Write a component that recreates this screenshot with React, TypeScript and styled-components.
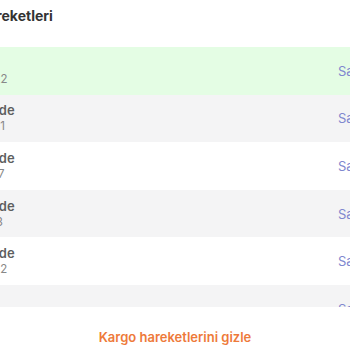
import * as React from 'react'
import styled, {createGlobalStyle} from 'styled-components'

const GlobalStyle = createGlobalStyle`
  html, body {
    margin: 0;
    padding: 0;
    background: #ffffff;
    overflow: hidden;
  }
  body {
    font-family: Inter, "Noto Sans", sans-serif;
  }
`

interface IMovement {
    status: string
    date: string
    time: string
    delivered?: boolean
}

const movements: IMovement[] = [
    {status: 'Teslim', date: '14.03.2022', time: 'Salı, 14:22', delivered: true},
    {status: 'Kargo İade', date: '13.03.2021', time: 'Salı, 09:41'},
    {status: 'Kargo İade', date: '12.03.2017', time: 'Salı, 18:05'},
    {status: 'Kargo İade', date: '11.03.2013', time: 'Salı, 11:30'},
    {status: 'Kargo İade', date: '10.03.2022', time: 'Salı, 16:12'},
    {status: 'Yolda', date: '09.03.2022', time: 'Salı, 08:55'},
]

const Panel = styled.div`
  margin-left: -74px;
  width: 498px;
`

const Title = styled.h3`
  margin: 0;
  padding: 6px 16px 21px 9px;
  font-size: 14px;
  line-height: 20px;
  font-weight: 700;
  color: #333333;
`

const List = styled.ul`
  list-style: none;
  margin: 0;
  padding: 0;
  max-height: 260px;
  overflow: hidden;
`

interface IRowProps {
    $delivered?: boolean
}

const Row = styled.li<IRowProps>`
  display: flex;
  align-items: center;
  justify-content: space-between;
  height: 47.6px;
  padding: 0 16px 0 21px;
  box-sizing: border-box;
  background-color: ${props => props.$delivered ? '#e4fde4' : 'transparent'};

  &:nth-child(even) {
    background-color: #f4f4f5;
  }
`

const Info = styled.div`
  display: flex;
  flex-direction: column;
`

const Status = styled.span`
  font-size: 13px;
  line-height: 16px;
  font-weight: 600;
  color: #5f5f5f;
`

const DateText = styled.span`
  font-size: 11.5px;
  line-height: 16px;
  color: #888888;
`

const Time = styled.span`
  width: 70px;
  font-size: 13px;
  color: #8087cf;
  white-space: nowrap;
`

const Footer = styled.div`
  display: flex;
  justify-content: center;
  padding: 20px 0;
`

const HideButton = styled.button`
  border: none;
  background: none;
  padding: 0;
  font-family: inherit;
  font-size: 13px;
  line-height: 20px;
  font-weight: 600;
  color: #ee7a3a;
  cursor: pointer;
`

export default function App() {
    return (
        <>
            <GlobalStyle/>
            <Panel>
                <Title>Kargo hareketleri</Title>
                <List>
                    {movements.map((m, index) => (
                        <Row key={`move_${index}`} $delivered={m.delivered}>
                            <Info>
                                <Status>{m.status}</Status>
                                <DateText>{m.date}</DateText>
                            </Info>
                            <Time>{m.time}</Time>
                        </Row>
                    ))}
                </List>
                <Footer>
                    <HideButton>Kargo hareketlerini gizle</HideButton>
                </Footer>
            </Panel>
        </>
    )
}
